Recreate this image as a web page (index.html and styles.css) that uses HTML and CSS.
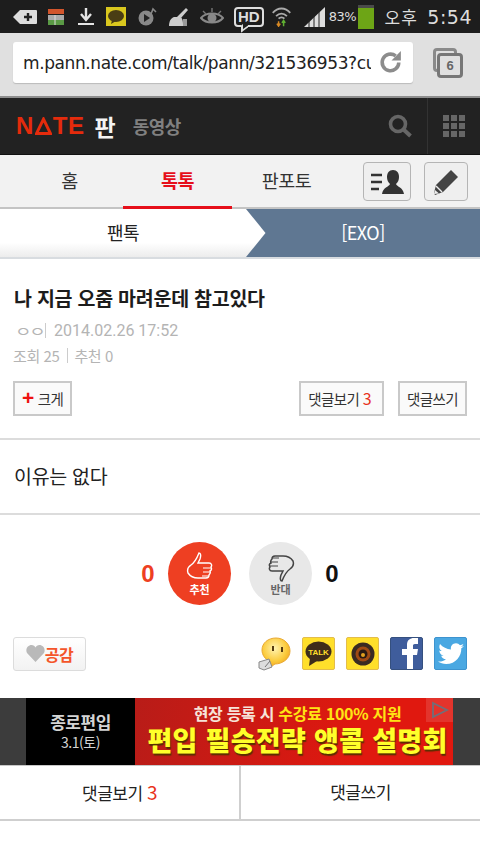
FILE: index.html
```html
<!DOCTYPE html>
<html lang="ko">

<head>
    <meta charset="UTF-8">
    <meta name="viewport" content="width=device-width, initial-scale=1.0">
    <title>NATE 판</title>
    <link rel="stylesheet" href="styles.css">
</head>

<body>

    <!-- Phone status bar -->
    <div class="status-bar">
        <svg class="st" style="width:24px" viewBox="0 0 24 20"><path d="M0 10 7 3h16a1 1 0 0 1 1 1v12a1 1 0 0 1-1 1H7z" fill="#ddd"/><path d="M11 10h8M15 6v8" stroke="#222" stroke-width="2.4"/></svg>
        <svg class="st" style="width:18px" viewBox="0 0 18 20"><rect y="2" width="16" height="5" fill="#d2552c"/><rect y="8" width="16" height="5" fill="#aaa"/><rect y="13" width="16" height="5" fill="#5a9a45"/><path d="M7 8v10" stroke="#ddd"/></svg>
        <svg class="st" style="width:18px" viewBox="0 0 18 20"><path d="M9 1v10M4 7l5 6 5-6" stroke="#e4e4e4" stroke-width="2.4" fill="none"/><path d="M1 17h16" stroke="#e4e4e4" stroke-width="2"/></svg>
        <svg class="st" style="width:20px" viewBox="0 0 20 20"><rect width="20" height="19" fill="#d9c71e"/><ellipse cx="10" cy="9" rx="8" ry="6" fill="#4a3d14"/><path d="M6 13l-1 4 5-3z" fill="#4a3d14"/></svg>
        <svg class="st" style="width:20px" viewBox="0 0 20 20"><circle cx="9" cy="11" r="7.5" fill="#888"/><path d="M7 7l6 4-6 4z" fill="#222"/><path d="M14 7l2-5 3 3" stroke="#888" stroke-width="1.6" fill="none"/></svg>
        <svg class="st" style="width:21px" viewBox="0 0 21 20"><path d="M1 19c0-5 2-8 5-9h6c3 1 3 5 3 9z" fill="#ccc"/><path d="M9 10 18 1l2 2-7 8z" fill="#ccc"/><path d="M15 12h4v7h-4z" fill="#999"/></svg>
        <svg class="st" style="width:24px" viewBox="0 0 24 20"><path d="M1 11c5-6 17-6 22 0-5 6-17 6-22 0z" fill="none" stroke="#888" stroke-width="2"/><circle cx="12" cy="11" r="4.5" fill="#888"/><path d="M3 4l3 3M12 1v4M21 4l-3 3" stroke="#777" stroke-width="1.4"/></svg>
        <span class="hd">HD</span>
        <svg class="st" style="width:23px" viewBox="0 0 23 24"><path d="M1 7c6-7 15-7 21 0M5 11c4-4 9-4 13 0M8 14c2-2 5-2 7 0" fill="none" stroke="#aaa" stroke-width="2.2"/><path d="M8 17v6M6 20l2 3 2-3" stroke="#d98a24" stroke-width="1.8" fill="none"/><path d="M14 23v-7M12 19l2-3 2 3" stroke="#5faf32" stroke-width="1.8" fill="none"/></svg>
        <svg class="st signal" viewBox="0 0 21 20"><path d="M0 20 21 0v20z" fill="#ddd"/><path d="M5 13v7M10 9v11M15 4v16" stroke="#222" stroke-width="1"/></svg>
        <span class="pct">83%</span>
        <span class="battery"></span>
        <span class="clock"><span class="ampm">오후</span> 5:54</span>
    </div>

    <!-- Browser toolbar -->
    <div class="browser-bar">
        <div class="url-box">
            <span class="url">m.pann.nate.com/talk/pann/321536953?cu</span>
            <svg class="reload" viewBox="0 0 24 24"><path d="M20 12a8 8 0 1 1-3-6.3" fill="none" stroke="#8c8c8c" stroke-width="3.4"/><path d="M22 1v9h-9z" fill="#8c8c8c"/></svg>
        </div>
        <div class="tabs-btn">
            <span class="tabs-back"></span>
            <span class="tabs-front">6</span>
        </div>
    </div>

    <!-- Site header -->
    <div class="nate-header">
        <div class="logo">N<svg class="logo-a" viewBox="0 0 16 17"><path d="M8 2 14.500 15.500h-13z" fill="none" stroke="#e52b0c" stroke-width="2.800"/></svg>TE</div>
        <div class="logo-pan">판</div>
        <div class="logo-sub">동영상</div>
        <div class="header-right">
            <svg class="search" viewBox="0 0 24 24"><circle cx="10" cy="10" r="7.500" fill="none" stroke="#666" stroke-width="3.600"/><path d="M15.500 15.500 22.500 22" stroke="#666" stroke-width="4"/></svg>
            <div class="grid-cell">
                <div class="grid-icon"><i></i><i></i><i></i><i></i><i></i><i></i><i></i><i></i><i></i></div>
            </div>
        </div>
    </div>

    <!-- Main tabs -->
    <div class="main-tabs">
        <a class="tab">홈</a>
        <a class="tab active">톡톡</a>
        <a class="tab">판포토</a>
        <div class="tab-btns">
            <span class="square-btn wide">
                <svg width="34" height="26" viewBox="0 0 34 26"><path d="M1 6h11M1 13h11M1 20h8" stroke="#333" stroke-width="2.400"/><path d="M23 1c4 0 6 3 6 7 0 3-1 5-3 7 1 3 7 3 8 10H12c1-7 7-7 8-10-2-2-3-4-3-7 0-4 2-7 6-7z" fill="#333"/></svg>
            </span>
            <span class="square-btn">
                <svg width="28" height="28" viewBox="0 0 28 28"><path d="M19 2 26 9 11 24 3 27 2 25 4 17z" fill="#444"/><path d="M4 18 10 24" stroke="#eee" stroke-width="1.400"/><path d="M3 22 2 26 7 25.500z" fill="#eee"/></svg>
            </span>
        </div>
    </div>

    <!-- Breadcrumb -->
    <div class="crumb">
        <div class="crumb-left">팬톡</div>
        <svg class="crumb-arrow" viewBox="0 0 20 48" preserveAspectRatio="none"><defs><linearGradient id="cr" x1="0" y1="0" x2="0" y2="1"><stop offset="0.700" stop-color="#fff"/><stop offset="1" stop-color="#ececec"/></linearGradient></defs><rect width="20" height="48" fill="#5f7792"/><path d="M0 0 19.500 24 0 48z" fill="url(#cr)"/></svg>
        <div class="crumb-right">[EXO]</div>
    </div>

    <!-- Article head -->
    <div class="article-head">
        <h1 class="title">나 지금 오줌 마려운데 참고있다</h1>
        <div class="meta-line first"><span class="author">ㅇㅇ</span><span class="sep"></span><span>2014.02.26 17:52</span></div>
        <div class="meta-line"><span>조회 25</span><span class="sep gap"></span><span>추천 0</span></div>
        <div class="btn-row">
            <a class="small-btn"><b class="plus">+</b>크게</a>
            <div class="btn-right">
                <a class="small-btn view">댓글보기 <em>3</em></a>
                <a class="small-btn">댓글쓰기</a>
            </div>
        </div>
    </div>

    <div class="article-body">이유는 없다</div>

    <!-- Vote -->
    <div class="vote">
        <span class="count red">0</span>
        <div class="circle up">
            <svg width="28" height="30" viewBox="0 0 28 30"><path d="M13 1c2 0 2 3 1 6l-2 4h11c3 0 3 3 2 4 1 2 1 3-1 4 1 2 0 3-1 4 0 2-1 3-3 3h-8c-5 0-8-2-10-5C1 18 2 15 5 13c3-2 6-7 8-12z" fill="none" stroke="#fff" stroke-width="1.400"/><path d="M17 16h8M17 20h7M16 24h6" stroke="#fff" stroke-width="1.200"/></svg>
            <span>추천</span>
        </div>
        <div class="circle down">
            <svg width="28" height="30" viewBox="0 0 28 30"><path d="M15 29c-2 0-2-3-1-6l2-4H5c-3 0-3-3-2-4-1-2-1-3 1-4-1-2 0-3 1-4 0-2 1-3 3-3h8c5 0 8 2 10 5 1 3 0 6-3 8-3 2-6 7-8 12z" fill="none" stroke="#444" stroke-width="1.500"/><path d="M11 14H3M11 10H4M12 6H6" stroke="#444" stroke-width="1.200"/></svg>
            <span>반대</span>
        </div>
        <span class="count">0</span>
    </div>

    <!-- Like and share -->
    <div class="share-row">
        <a class="like-btn">
            <svg width="19" height="17" viewBox="0 0 19 17"><path d="M9.500 17 1 8C-1 4 2 0 5.500 0 7.500 0 8.800 1 9.500 2.500 10.200 1 11.500 0 13.500 0 17 0 20 4 18 8z" fill="#b9b9b9"/></svg>공감
        </a>
        <div class="share-icons">
            <svg class="smile" viewBox="0 0 33 34"><defs><radialGradient id="sm" cx="45%" cy="35%" r="70%"><stop offset="0" stop-color="#fff3b0"/><stop offset="0.600" stop-color="#fbcb3c"/><stop offset="1" stop-color="#ee9b16"/></radialGradient></defs><path d="M18 1c8 0 14 6 14 13 0 8-8 13-15 13l-6 4 1-6C7 22 4 18 4 13 4 6 10 1 18 1z" fill="url(#sm)" stroke="#e9a934"/><path d="M15 9v5M24 10v5" stroke="#553a10" stroke-width="2"/><path d="M1 25 11 22l3 8-8 3-5-2z" fill="#ddd" stroke="#888"/><path d="M7 30 12 24" stroke="#777"/></svg>
            <span class="share kakao"><svg width="27" height="25" viewBox="0 0 27 25"><ellipse cx="13.500" cy="10.500" rx="13" ry="10" fill="#3e2c1a"/><path d="M5 17l-1 8 8-5z" fill="#3e2c1a"/><text x="13.500" y="14" text-anchor="middle" class="talk">TALK</text></svg></span>
            <span class="share kakao"><svg width="24" height="24" viewBox="0 0 24 24"><circle cx="12" cy="12" r="11.500" fill="#3a2a22"/><circle cx="12" cy="12" r="7.500" fill="#a04a14"/><circle cx="12" cy="12" r="4.500" fill="#2a1a12"/><circle cx="12" cy="13" r="2" fill="#e2a020"/></svg></span>
            <span class="share fb"><svg width="22" height="32" viewBox="0 0 22 32"><path d="M9 32V18H4v-6h5V8c0-5 3-7 7-7h4v6h-3c-2 0-2 1-2 2v3h5l-1 6h-4v14z" fill="#fff"/></svg></span>
            <span class="share tw"><svg width="26" height="22" viewBox="0 0 26 22"><path d="M26 3c-1 .5-2 .8-3 .9 1-.6 2-1.700 2.400-2.900-1 .6-2.200 1-3.400 1.300C21 1 19.600.3 18 .3c-3.400 0-5.800 3-5 6.200C8.700 6.300 4.800 4.200 2 1 .6 3.400 1.300 6.600 3.700 8.100 2.800 8.100 2 7.800 1.300 7.400c0 2.500 1.700 4.700 4.200 5.200-.8.200-1.600.2-2.300.1.600 2 2.500 3.500 4.800 3.500C5.800 18 3 18.800 0 18.500 2.300 20 5.100 21 8.100 21c9.900 0 15.500-8.300 15.200-15.800C24.300 4.600 25.300 3.900 26 3z" fill="#fff"/></svg></span>
        </div>
    </div>

    <!-- Ad banner -->
    <div class="ad">
        <div class="ad-black">
            <div class="ad-name">종로편입</div>
            <div class="ad-date">3.1(토)</div>
        </div>
        <div class="ad-red">
            <div class="ad-top">현장 등록 시 <span>수강료 100% 지원</span></div>
            <div class="ad-main">편입 필승전략 앵콜 설명회</div>
            <span class="ad-mark"><svg width="18" height="18" viewBox="0 0 18 18"><path d="M2 2 16 9 2 16z" fill="none" stroke="#6f6f7a" stroke-width="1.800"/></svg></span>
        </div>
    </div>

    <!-- Bottom comment buttons -->
    <div class="bottom-btns">
        <a class="bottom-btn">댓글보기 <em>3</em></a>
        <a class="bottom-btn">댓글쓰기</a>
    </div>

</body>

</html>
```

FILE: styles.css
```css
* {
    box-sizing: border-box;
}

body {
    margin: 0;
    background: #fff;
    color: #222;
    font-family: "Noto Sans CJK KR", "Noto Sans", sans-serif;
}

a {
    color: inherit;
    text-decoration: none;
}

em {
    font-style: normal;
    color: #e8321c;
}

/* Status bar */
.status-bar {
    display: flex;
    align-items: center;
    height: 33px;
    padding: 0 8px 0 13px;
    background: #1d1d1d;
    color: #ddd;
    white-space: nowrap;
}

.st {
    flex: none;
    height: 20px;
    margin-right: 11px;
}

.hd {
    position: relative;
    margin: 0 6px 0 -1px;
    padding: 0 2px;
    height: 20px;
    border: 2px solid #ddd;
    border-radius: 4px;
    font: bold 15px/16px "Liberation Sans", sans-serif;
}

.hd::after {
    content: "";
    position: absolute;
    left: 5px;
    bottom: -5px;
    width: 5px;
    height: 5px;
    background: #1d1d1d;
    border-left: 2px solid #ddd;
    border-bottom: 2px solid #ddd;
    transform: skewY(-35deg);
}

.signal {
    margin-right: 4px;
    margin-left: 0;
}

.pct {
    font-size: 13px;
    font-family: "DejaVu Sans", sans-serif;
    letter-spacing: -0.5px;
    margin-right: 2px;
}

.battery {
    width: 16px;
    height: 24px;
    margin-right: 8px;
    background: #6da516;
    border-top: 3px solid #4a4a4a;
}

.clock {
    margin-left: auto;
    font: 19px "DejaVu Sans", sans-serif;
    letter-spacing: 0.5px;
}

.ampm {
    font-family: "Noto Sans CJK KR", sans-serif;
    font-size: 17px;
    margin-right: 3px;
    letter-spacing: 1px;
}

/* Browser toolbar */
.browser-bar {
    display: flex;
    align-items: center;
    height: 65px;
    padding: 0 13px 4px;
    background: #e0e0e0;
    border-bottom: 2px solid #8e8e8e;
}

.url-box {
    display: flex;
    align-items: center;
    width: 400px;
    height: 41px;
    padding: 0 10px;
    background: #fff;
    border-radius: 3px;
    box-shadow: 0 1px 1px #bbb;
}

.url {
    width: 349px;
    overflow: hidden;
    white-space: nowrap;
    font: 17px "DejaVu Sans", sans-serif;
    letter-spacing: -0.4px;
    color: #222;
}

.reload {
    width: 25px;
    height: 25px;
    margin-left: 7px;
}

.tabs-btn {
    position: relative;
    width: 30px;
    height: 30px;
    margin-left: 20px;
}

.tabs-back {
    position: absolute;
    left: 0;
    top: 0;
    width: 24px;
    height: 24px;
    border: 3px solid #8a8a8a;
    border-radius: 4px;
}

.tabs-front {
    position: absolute;
    left: 4px;
    top: 5px;
    width: 26px;
    height: 25px;
    border: 3px solid #777;
    border-radius: 4px;
    background: #e0e0e0;
    color: #666;
    font: bold 13px/19px "Liberation Sans", sans-serif;
    text-align: center;
}

/* Site header */
.nate-header {
    display: flex;
    align-items: center;
    height: 57px;
    padding-left: 16px;
    background: #222;
    border-bottom: 1px solid #111;
}

.logo {
    display: flex;
    align-items: center;
    color: #e52b0c;
    font: bold 24px "Liberation Sans", sans-serif;
    letter-spacing: 0.5px;
}

.logo-a {
    width: 17px;
    height: 18px;
    margin: 0 1px;
}

.logo-pan {
    margin-left: 10px;
    color: #f4f4f4;
    font-size: 23px;
    font-weight: bold;
}

.logo-sub {
    margin-left: 17px;
    color: #808080;
    font-size: 18px;
    font-weight: bold;
    letter-spacing: -0.5px;
}

.header-right {
    display: flex;
    align-items: center;
    height: 100%;
    margin-left: auto;
}

.search {
    width: 24px;
    height: 24px;
    margin-right: 15px;
}

.grid-cell {
    display: flex;
    align-items: center;
    justify-content: center;
    width: 53px;
    height: 100%;
    border-left: 1px solid #333;
}

.grid-icon {
    display: grid;
    grid-template-columns: repeat(3, 6px);
    gap: 2px;
}

.grid-icon i {
    height: 6px;
    background: #666;
}

/* Main tabs */
.main-tabs {
    display: flex;
    height: 54px;
    background: #f2f2f2;
    border-bottom: 2px solid #c4c4c4;
}

.tab {
    width: 109px;
    margin-bottom: -2px;
    border-bottom: 3px solid transparent;
    text-align: center;
    font-size: 18.500px;
    line-height: 51px;
    letter-spacing: -0.5px;
    color: #333;
}

.tab:first-child {
    width: 123px;
    padding-left: 16px;
}

.tab.active {
    border-bottom-color: #e60f1a;
    color: #e60f1a;
    font-weight: bold;
}

.tab-btns {
    display: flex;
    gap: 13px;
    margin: 7px 0 0 22px;
}

.square-btn {
    display: flex;
    align-items: center;
    justify-content: center;
    width: 44px;
    height: 39px;
    background: #efefef;
    border: 1px solid #b5b5b5;
    border-radius: 4px;
}

.square-btn.wide {
    width: 48px;
}

/* Breadcrumb */
.crumb {
    display: flex;
    height: 50px;
    border-bottom: 2px solid #d8dce0;
    font-size: 18px;
    line-height: 46px;
    letter-spacing: -0.5px;
    text-align: center;
}

.crumb-left {
    width: 246px;
    background: linear-gradient(#fff 70%, #ececec);
}

.crumb-arrow {
    width: 20px;
    height: 48px;
}

.crumb-right {
    flex: 1;
    padding-right: 20px;
    background: #5f7792;
    color: #fff;
}

/* Article head */
.article-head {
    padding: 25px 13px 22px 14px;
    border-bottom: 2px solid #dcdcdc;
}

.title {
    margin: 0 0 6px;
    font-size: 19.500px;
    line-height: 28px;
    font-weight: bold;
    letter-spacing: -0.25px;
    color: #1c1c1c;
}

.meta-line {
    display: flex;
    align-items: center;
    height: 25px;
    margin-left: -1px;
    font-size: 15px;
    letter-spacing: -0.4px;
    color: #b4b4b4;
}

.meta-line.first {
    margin-left: 1px;
    font-family: Roboto, "Noto Sans CJK KR", sans-serif;
    font-size: 16px;
    letter-spacing: 0;
}

.author {
    font-family: "Noto Sans CJK KR", sans-serif;
    font-size: 15px;
    letter-spacing: -2px;
    transform: scaleX(1.200);
    transform-origin: left;
    width: 24px;
}

.sep {
    width: 1px;
    height: 15px;
    margin: 0 8px 0 6px;
    background: #ccc;
}

.sep.gap {
    margin: 0 6px 0 8px;
}

.btn-row {
    display: flex;
    justify-content: space-between;
    margin: 13px 0 0 -1px;
}

.btn-right {
    display: flex;
    gap: 14px;
}

.small-btn {
    height: 35px;
    padding: 0 7px;
    background: #fafafa;
    border: 2px solid #c9c9c9;
    font-size: 14.500px;
    line-height: 31px;
    letter-spacing: -0.6px;
    color: #333;
    white-space: nowrap;
}

.small-btn.view {
    padding-right: 11px;
}

.small-btn em {
    font-size: 16px;
}

.plus {
    margin-right: 4px;
    color: #ee1111;
    font: bold 21px/20px "Liberation Sans", sans-serif;
}

.article-body {
    height: 75px;
    padding: 0 14px;
    border-bottom: 2px solid #dcdcdc;
    font-size: 19.500px;
    line-height: 72px;
    letter-spacing: -0.3px;
    color: #222;
}

/* Vote */
.vote {
    display: flex;
    align-items: center;
    justify-content: center;
    gap: 18px;
    padding-top: 27px;
}

.count {
    width: 14px;
    text-align: center;
    font: bold 24px "Liberation Sans", sans-serif;
    color: #111;
}

.count.red {
    color: #ee3f22;
}

.count:first-child {
    margin-right: -5px;
}

.count:last-child {
    margin-left: -5px;
}

.circle {
    display: flex;
    flex-direction: column;
    align-items: center;
    justify-content: center;
    width: 63px;
    height: 63px;
    border-radius: 50%;
    font-size: 11px;
    font-weight: bold;
    line-height: 14px;
}

.circle.up {
    background: #ee3f22;
    color: #fff;
}

.circle.down {
    background: #e8e8e8;
    color: #666;
}

/* Like and share */
.share-row {
    display: flex;
    align-items: center;
    justify-content: space-between;
    height: 93px;
    padding: 4px 13px 0;
}

.like-btn {
    display: flex;
    align-items: center;
    justify-content: center;
    width: 73px;
    height: 34px;
    background: linear-gradient(#fff, #f2f2f2);
    border: 1px solid #dcdcdc;
    border-radius: 3px;
    color: #f4552a;
    font-size: 16px;
    font-weight: bold;
    letter-spacing: -0.5px;
}

.share-icons {
    display: flex;
    align-items: center;
    gap: 11px;
}

.smile {
    width: 33px;
    height: 34px;
}

.share {
    display: flex;
    align-items: center;
    justify-content: center;
    width: 33px;
    height: 33px;
    overflow: hidden;
    border-radius: 2px;
    border: 1px solid;
}

.share.kakao {
    background: #ffdf2b;
    border-color: #e3bd4c;
}

.share.fb {
    align-items: flex-end;
    padding-left: 5px;
    background: #3f5d9c;
    border-color: #35507f;
}

.share.tw {
    background: #4aa8e2;
    border-color: #3d93cf;
}

.talk {
    fill: #ffdf2b;
    font: bold 8px "Liberation Sans", sans-serif;
}

/* Ad banner */
.ad {
    display: flex;
    height: 68px;
    padding-left: 26px;
    padding-right: 27px;
    background: #3c3c3c;
    border-bottom: 1px solid #c8c8c8;
}

.ad-black {
    width: 109px;
    background: #000;
    color: #d4d4d4;
    text-align: center;
}

.ad-name {
    margin-top: 13px;
    font-size: 17px;
    font-weight: bold;
    line-height: 21px;
    letter-spacing: -0.5px;
}

.ad-date {
    font-size: 14px;
    line-height: 21px;
    letter-spacing: -0.5px;
}

.ad-red {
    position: relative;
    flex: 1;
    padding-left: 7px;
    background: linear-gradient(100deg, #b81c18, #e0180f 70%);
    text-align: center;
    white-space: nowrap;
}

.ad-top {
    margin-top: 4px;
    font-size: 16px;
    font-weight: bold;
    line-height: 22px;
    letter-spacing: -0.3px;
    color: #f6e3d8;
}

.ad-top span {
    color: #ffe414;
}

.ad-main {
    font-size: 27px;
    font-weight: 900;
    line-height: 32px;
    letter-spacing: 0.3px;
    color: #ffff2a;
    text-shadow: 1px 2px 1px #5a3000;
}

.ad-mark {
    position: absolute;
    top: 0;
    right: 0;
    display: flex;
    align-items: center;
    justify-content: center;
    width: 27px;
    height: 24px;
    background: rgba(255, 255, 255, 0.12);
}

/* Bottom comment buttons */
.bottom-btns {
    display: flex;
    height: 55px;
    border-bottom: 2px solid #cfcfcf;
}

.bottom-btn {
    flex: 1;
    text-align: center;
    font-size: 17px;
    line-height: 51px;
    letter-spacing: -0.5px;
    color: #222;
}

.bottom-btn em {
    font-size: 19px;
}

.bottom-btn:first-child {
    border-right: 2px solid #cfcfcf;
}
```
